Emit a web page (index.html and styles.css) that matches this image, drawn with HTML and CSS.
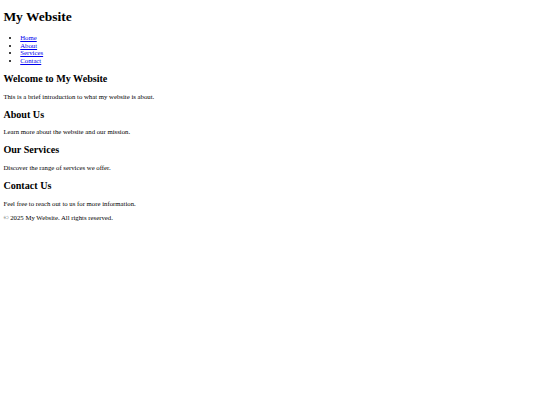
FILE: index.html
```html
<!DOCTYPE html>
<html>
<head>
<meta charset="utf-8">
<title>My Website</title>
<link rel="stylesheet" href="styles.css">
</head>
<body class="page">
<header class="site-header">
  <h1 class="site-title">My Website</h1>
  <nav class="site-nav">
    <ul class="nav-list">
      <li class="nav-item"><a class="nav-link" href="#home">Home</a></li>
      <li class="nav-item"><a class="nav-link" href="#about">About</a></li>
      <li class="nav-item"><a class="nav-link" href="#services">Services</a></li>
      <li class="nav-item"><a class="nav-link" href="#contact">Contact</a></li>
    </ul>
  </nav>
</header>
<main class="content">
  <section class="section" id="home">
    <h2 class="section-title">Welcome to My Website</h2>
    <p class="text">This is a brief introduction to what my website is about.</p>
  </section>
  <section class="section" id="about">
    <h2 class="section-title">About Us</h2>
    <p class="text">Learn more about the website and our mission.</p>
  </section>
  <section class="section" id="services">
    <h2 class="section-title">Our Services</h2>
    <p class="text">Discover the range of services we offer.</p>
  </section>
  <section class="section" id="contact">
    <h2 class="section-title">Contact Us</h2>
    <p class="text">Feel free to reach out to us for more information.</p>
  </section>
</main>
<footer class="site-footer">
  <p class="text">&copy; 2025 My Website. All rights reserved.</p>
</footer>
</body>
</html>
```

FILE: styles.css
```css
.page {
  margin: 3.375px;
  font-family: "Liberation Serif", "Times New Roman", serif;
  font-size: 6.75px;
  line-height: 7.594px;
  color: #000;
  background: #fff;
}
.site-title {
  font-size: 13.5px;
  line-height: 15.61px;
  font-weight: bold;
  margin: 6.03px 0 9.045px;
}
.nav-list {
  margin: 6.75px 0;
  padding-left: 16.875px;
  list-style: disc;
}
.nav-item {
  line-height: 7.594px;
}
.nav-link {
  color: #0000ee;
  text-decoration: underline;
}
.section-title {
  font-size: 10.125px;
  line-height: 11.39px;
  font-weight: bold;
  margin: 8.404px 0;
}
.text {
  margin: 6.75px 0;
}
```
